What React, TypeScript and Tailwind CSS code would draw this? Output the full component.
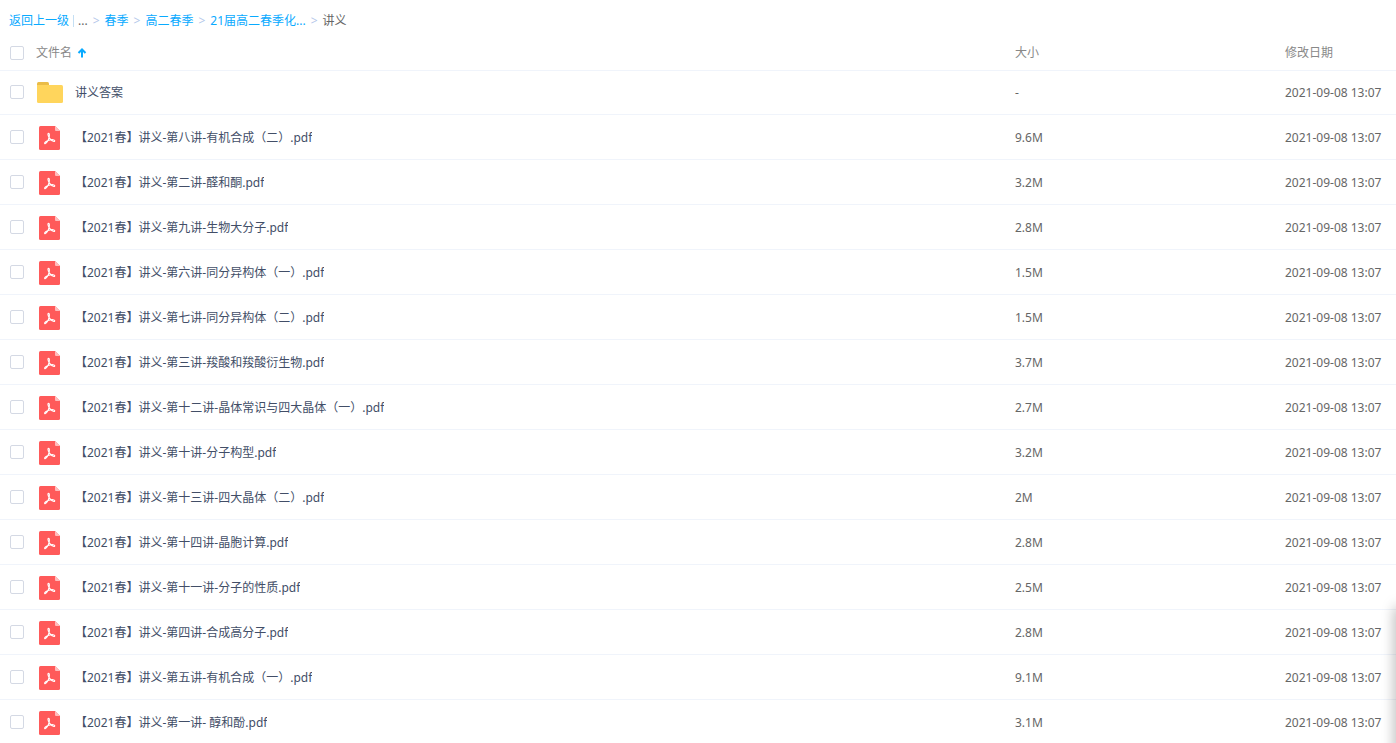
import { useState } from "react";

type FileItem = {
  name: string;
  size: string;
  date: string;
  type: "folder" | "pdf";
};

const DATE = "2021-09-08 13:07";

const files: FileItem[] = [
  { name: "讲义答案", size: "-", date: DATE, type: "folder" },
  { name: "【2021春】讲义-第八讲-有机合成（二）.pdf", size: "9.6M", date: DATE, type: "pdf" },
  { name: "【2021春】讲义-第二讲-醛和酮.pdf", size: "3.2M", date: DATE, type: "pdf" },
  { name: "【2021春】讲义-第九讲-生物大分子.pdf", size: "2.8M", date: DATE, type: "pdf" },
  { name: "【2021春】讲义-第六讲-同分异构体（一）.pdf", size: "1.5M", date: DATE, type: "pdf" },
  { name: "【2021春】讲义-第七讲-同分异构体（二）.pdf", size: "1.5M", date: DATE, type: "pdf" },
  { name: "【2021春】讲义-第三讲-羧酸和羧酸衍生物.pdf", size: "3.7M", date: DATE, type: "pdf" },
  { name: "【2021春】讲义-第十二讲-晶体常识与四大晶体（一）.pdf", size: "2.7M", date: DATE, type: "pdf" },
  { name: "【2021春】讲义-第十讲-分子构型.pdf", size: "3.2M", date: DATE, type: "pdf" },
  { name: "【2021春】讲义-第十三讲-四大晶体（二）.pdf", size: "2M", date: DATE, type: "pdf" },
  { name: "【2021春】讲义-第十四讲-晶胞计算.pdf", size: "2.8M", date: DATE, type: "pdf" },
  { name: "【2021春】讲义-第十一讲-分子的性质.pdf", size: "2.5M", date: DATE, type: "pdf" },
  { name: "【2021春】讲义-第四讲-合成高分子.pdf", size: "2.8M", date: DATE, type: "pdf" },
  { name: "【2021春】讲义-第五讲-有机合成（一）.pdf", size: "9.1M", date: DATE, type: "pdf" },
  { name: "【2021春】讲义-第一讲- 醇和酚.pdf", size: "3.1M", date: DATE, type: "pdf" },
];

const crumbs = ["春季", "高二春季", "21届高二春季化..."];

const FolderIcon = () => (
  <svg className="mb-0.5 ml-px h-[21px] w-[26px] shrink-0" viewBox="0 0 26 21" aria-hidden="true">
    <path d="M0 8V1.5Q0 0 1.5 0H10.5Q12 0 12 1.5V8Z" fill="#eabc48" />
    <path d="M0 3H24.5Q26 3 26 4.5V19.5Q26 21 24.5 21H1.5Q0 21 0 19.5Z" fill="#ffd55c" />
  </svg>
);

const PdfIcon = () => (
  <svg className="mt-px ml-[3px] h-6 w-[21px] shrink-0" viewBox="0 0 21 24" aria-hidden="true">
    <path d="M1.5 0H16L21 5V22.5Q21 24 19.5 24H1.5Q0 24 0 22.5V1.5Q0 0 1.5 0Z" fill="#ff5a5a" />
    <path d="M16 0L21 5H17Q16 5 16 4Z" fill="#ffbdbd" />
    <path
      d="M9.6 7.4C8.5 7.4 8.9 9.6 10.1 11.5C11.3 13.4 13.2 15.3 14.9 15.5C16.2 15.6 16 13.9 14.2 13.7C11.6 13.5 8.8 14.3 6.7 15.7C5.1 16.8 5.4 18.1 6.5 17.6C8 16.8 9.3 14.2 10 11.7C10.6 9.5 10.6 7.4 9.6 7.4Z"
      fill="none"
      stroke="#fff"
      strokeWidth="1.1"
      strokeLinejoin="round"
    />
  </svg>
);

const Checkbox = ({
  label,
  checked,
  onChange,
}: {
  label: string;
  checked: boolean;
  onChange: () => void;
}) => (
  <input
    type="checkbox"
    aria-label={label}
    checked={checked}
    onChange={onChange}
    className="block size-3.5 shrink-0 appearance-none rounded-xs border border-[#d4d9e4] bg-white checked:border-[#09aaff] checked:bg-[#09aaff]"
  />
);

const Separator = () => <span className="px-[5px] text-[#b4c8ea]">&gt;</span>;

const App = () => {
  const [selected, setSelected] = useState<string[]>([]);
  const allSelected = selected.length === files.length;

  const toggle = (name: string) => {
    setSelected((prev) =>
      prev.includes(name) ? prev.filter((n) => n !== name) : [...prev, name]
    );
  };

  return (
    <div className="h-screen overflow-hidden bg-white font-['Noto_Sans','Noto_Sans_CJK_SC',sans-serif] text-xs text-[#424e67]">
      <nav className="flex h-8 items-center pt-2.5 pl-[9px] whitespace-nowrap">
        <a href="#" className="text-[#09aaff]">返回上一级</a>
        <span className="ml-1 h-3 w-px bg-[#c4dff4]" />
        <span className="ml-1 text-[#666]">...</span>
        {crumbs.map((crumb) => (
          <span key={crumb} className="flex">
            <Separator />
            <a href="#" className="text-[#09aaff]">{crumb}</a>
          </span>
        ))}
        <Separator />
        <span className="text-[#666]">讲义</span>
      </nav>

      <table className="w-full table-fixed border-collapse text-left">
        <colgroup>
          <col />
          <col className="w-[270px]" />
          <col className="w-[111px]" />
        </colgroup>
        <thead>
          <tr className="h-[38px] border-b border-[#f0f4fb] text-[#888]">
            <th className="p-0 pt-1 pl-2.5 font-normal">
              <div className="flex items-center">
                <Checkbox
                  label="全选"
                  checked={allSelected}
                  onChange={() => setSelected(allSelected ? [] : files.map((f) => f.name))}
                />
                <button type="button" className="ml-3 flex items-center gap-[5px]">
                  文件名
                  <svg className="size-2.5" viewBox="0 0 10 10" aria-label="升序">
                    <path d="M5 9.5V1.5M1.5 5L5 1.5L8.5 5" fill="none" stroke="#09aaff" strokeWidth="2" />
                  </svg>
                </button>
              </div>
            </th>
            <th className="p-0 pt-1 font-normal">大小</th>
            <th className="p-0 pt-1 font-normal">修改日期</th>
          </tr>
        </thead>
        <tbody>
          {files.map((file) => (
            <tr
              key={file.name}
              className={`border-b border-[#f0f4fb] ${file.type === "folder" ? "h-11" : "h-[45px]"}`}
            >
              <td className="p-0 pt-0.5 pl-2.5">
                <div className="flex items-center">
                  <div className="pb-0.5">
                    <Checkbox
                      label={file.name}
                      checked={selected.includes(file.name)}
                      onChange={() => toggle(file.name)}
                    />
                  </div>
                  <div className="ml-3 flex w-[39px] items-center">
                    {file.type === "folder" ? <FolderIcon /> : <PdfIcon />}
                  </div>
                  <a href="#" className="truncate hover:text-[#09aaff]">{file.name}</a>
                </div>
              </td>
              <td className="p-0 pt-0.5 text-[#666]">{file.size}</td>
              <td className="p-0 pt-0.5 whitespace-nowrap text-[#666]">{file.date}</td>
            </tr>
          ))}
        </tbody>
      </table>

      {/* edge of the collapsed side panel */}
      <div className="fixed -right-2 -bottom-4 h-[152px] w-2 shadow-[0_0_14px_rgba(0,0,0,0.4)]" />
    </div>
  );
};

export default App;
